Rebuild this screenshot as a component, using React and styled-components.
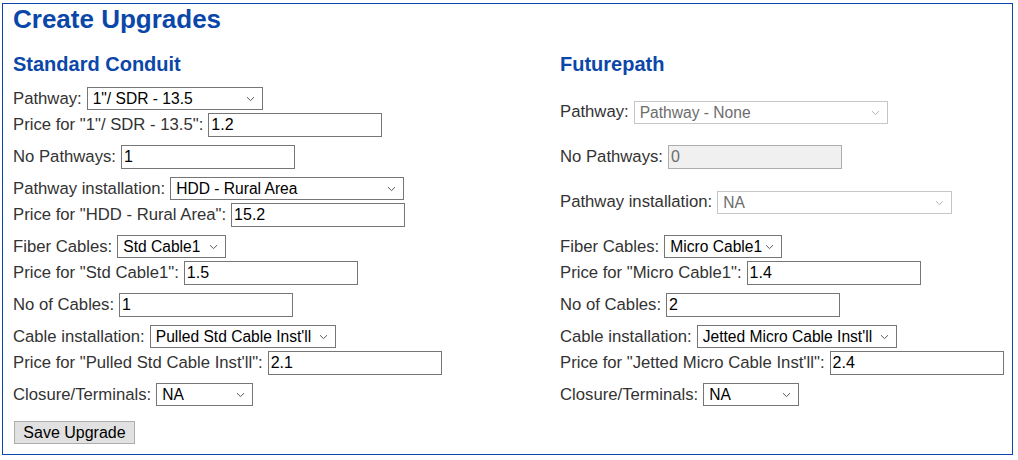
import React from "react";
import styled, { createGlobalStyle } from "styled-components";

const GlobalStyle = createGlobalStyle`
  html, body {
    margin: 0;
    padding: 0;
    background: #fff;
  }
  body {
    font-family: "Liberation Sans", Arial, sans-serif;
  }
`;

const standard = [
  { label: "Pathway", select: "1\"/ SDR - 13.5", width: 176, price: "1.2" },
  { label: "No Pathways", input: "1" },
  { label: "Pathway installation", select: "HDD - Rural Area", width: 234, price: "15.2" },
  { label: "Fiber Cables", select: "Std Cable1", width: 109, price: "1.5" },
  { label: "No of Cables", input: "1" },
  { label: "Cable installation", select: "Pulled Std Cable Inst'll", width: 186, price: "2.1" },
  { label: "Closure/Terminals", select: "NA", width: 97 },
];

const futurepath = [
  { label: "Pathway", select: "Pathway - None", width: 254, disabled: true },
  { label: "No Pathways", input: "0", disabled: true },
  { label: "Pathway installation", select: "NA", width: 235, disabled: true },
  { label: "Fiber Cables", select: "Micro Cable1", width: 118, price: "1.4" },
  { label: "No of Cables", input: "2" },
  { label: "Cable installation", select: "Jetted Micro Cable Inst'll", width: 200, price: "2.4" },
  { label: "Closure/Terminals", select: "NA", width: 96 },
];

const Chevron = ({ disabled }) => (
  <ChevronIcon width="9" height="6" viewBox="0 0 9 6">
    <path
      d="M1 1.2 L4.5 4.6 L8 1.2"
      fill="none"
      stroke={disabled ? "#b4b4b4" : "#5a5a5a"}
      strokeWidth="1"
    />
  </ChevronIcon>
);

const Dropdown = ({ value, width, disabled }) => (
  <SelectWrap $width={width}>
    <Select defaultValue={value} disabled={disabled}>
      <option value={value}>{value}</option>
    </Select>
    <Chevron disabled={disabled} />
  </SelectWrap>
);

const Field = ({ item }) => (
  <Group>
    <Row>
      <Label>{item.label}:</Label>
      {item.select !== undefined ? (
        <Dropdown value={item.select} width={item.width} disabled={item.disabled} />
      ) : (
        <TextInput type="text" defaultValue={item.input} disabled={item.disabled} />
      )}
    </Row>
    {item.price && (
      <Row>
        <Label>Price for "{item.select}":</Label>
        <TextInput type="text" defaultValue={item.price} />
      </Row>
    )}
  </Group>
);

export default function App() {
  return (
    <>
      <GlobalStyle />
      <Panel>
        <Title>Create Upgrades</Title>
        <Grid>
          <Heading>Standard Conduit</Heading>
          <Heading>Futurepath</Heading>
          {standard.map((item, i) => (
            <React.Fragment key={item.label}>
              <Field item={item} />
              <Field item={futurepath[i]} />
            </React.Fragment>
          ))}
        </Grid>
        <Footer>
          <Button type="button">Save Upgrade</Button>
        </Footer>
      </Panel>
    </>
  );
}

const Panel = styled.div`
  box-sizing: border-box;
  margin: 3px 0 0 2px;
  width: 1011px;
  height: 452px;
  border: 1px solid #0b48ad;
  padding: 1px 10px 0 10px;
`;

const Title = styled.h1`
  margin: 0;
  color: #0b47a9;
  font-size: 26px;
  font-weight: bold;
  line-height: 29px;
`;

const Grid = styled.div`
  display: grid;
  grid-template-columns: 547px 1fr;
  row-gap: 8px;
  align-items: center;
  margin-top: 19px;
`;

const Heading = styled.h2`
  margin: 0 0 4px 0;
  color: #0b47a9;
  font-size: 20px;
  font-weight: bold;
  line-height: 22px;
`;

const Group = styled.div`
  display: flex;
  flex-direction: column;
  gap: 3px;
`;

const Row = styled.div`
  display: flex;
  align-items: center;
  gap: 5px;
`;

const Label = styled.span`
  color: #333;
  font-size: 16.7px;
  white-space: pre;
`;

const SelectWrap = styled.span`
  position: relative;
  display: inline-flex;
  width: ${(p) => p.$width}px;
  height: 23px;
`;

const Select = styled.select`
  appearance: none;
  box-sizing: border-box;
  width: 100%;
  height: 100%;
  margin: 0;
  padding: 0 14px 0 5px;
  border: 1px solid #767676;
  border-radius: 0;
  background: #fff;
  color: #000;
  font-family: "Liberation Sans", Arial, sans-serif;
  font-size: 15.6px;
  outline: none;

  &:disabled {
    border-color: #c6c6c6;
    color: #6d6d6d;
    background: #fff;
    opacity: 1;
  }
`;

const ChevronIcon = styled.svg`
  position: absolute;
  right: 8px;
  top: 9px;
  pointer-events: none;
`;

const TextInput = styled.input`
  box-sizing: border-box;
  width: 174px;
  height: 24px;
  margin: 0;
  padding: 0 2px;
  border: 1px solid #767676;
  border-radius: 0;
  color: #000;
  font-family: "Liberation Sans", Arial, sans-serif;
  font-size: 16px;
  outline: none;

  &:disabled {
    background: #f0f0f0;
    border-color: #adadad;
    color: #6d6d6d;
  }
`;

const Footer = styled.div`
  margin-top: 15px;
`;

const Button = styled.button`
  box-sizing: border-box;
  width: 121px;
  height: 23px;
  margin: 0 0 0 1px;
  padding: 0;
  border: 1px solid #adadad;
  border-radius: 0;
  background: #e1e1e1;
  color: #000;
  font-family: "Liberation Sans", Arial, sans-serif;
  font-size: 16px;
`;
